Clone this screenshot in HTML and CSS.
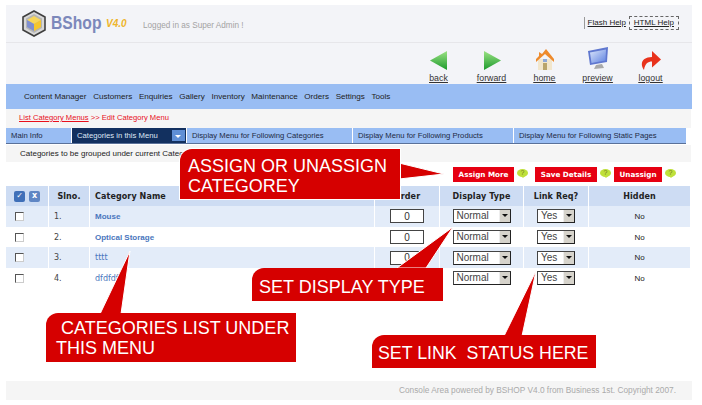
FILE: index.html
```html
<!DOCTYPE html>
<html lang="en">
<head>
    <meta charset="UTF-8">
    <meta name="viewport" content="width=device-width, initial-scale=1.0">
    <title>BShop - Edit Category Menu</title>
    <link rel="stylesheet" href="styles.css">
</head>
<body>
    <div class="page">
        <div class="top">
            <div class="logo">
                <svg width="24" height="27" viewBox="0 0 24 27">
                    <polygon points="12,1 23,7 23,20 12,26 1,20 1,7" fill="#d8d8d8" stroke="#3f3f3f" stroke-width="1.6"/>
                    <polygon points="12,4 20,8.500 20,18 12,23 4,18 4,8.500" fill="#b5b5b5"/>
                    <polygon points="12,6 19,10 12,14 5,10" fill="#f7d65a"/>
                    <polygon points="5,10 12,14 12,21 5,17" fill="#7f8fd0"/>
                    <polygon points="19,10 19,17 12,21 12,14" fill="#f5c62e"/>
                </svg>
                <span class="brand">BShop</span>
                <span class="version">V4.0</span>
            </div>
            <div class="logged">Logged in as Super Admin !</div>
            <div class="help">
                <a href="#" class="flash">Flash Help</a>
                <a href="#" class="html-help">HTML Help</a>
            </div>
        </div>

        <div class="toolbar">
            <a href="#" class="tool">
                <svg width="20" height="21" viewBox="0 0 20 21"><defs><linearGradient id="gr" x1="0" y1="0" x2="0" y2="1"><stop offset="0" stop-color="#9be284"/><stop offset="1" stop-color="#1c9a2c"/></linearGradient><linearGradient id="scr" x1="0" y1="0" x2="1" y2="1"><stop offset="0" stop-color="#dbe6fb"/><stop offset="1" stop-color="#5f82e0"/></linearGradient></defs><polygon points="18,1 18,20 1,10.500" fill="url(#gr)"/></svg>
                <span>back</span>
            </a>
            <a href="#" class="tool">
                <svg width="20" height="21" viewBox="0 0 20 21"><polygon points="2,1 2,20 19,10.500" fill="url(#gr)"/></svg>
                <span>forward</span>
            </a>
            <a href="#" class="tool">
                <svg width="20" height="23" viewBox="0 0 20 23"><polygon points="3,11 17,11 17,22 3,22" fill="#f2e6cc"/><rect x="8" y="15" width="4" height="7" fill="#b9a46a"/><rect x="8" y="11" width="4" height="3" fill="#8fa8d8"/><polygon points="11,1 19,11 19,14 10,6 1,14 1,11 4,8 4,4 7,6" fill="#ee8a2c"/></svg>
                <span>home</span>
            </a>
            <a href="#" class="tool">
                <svg width="22" height="24" viewBox="0 0 22 24"><polygon points="1,4 21,0 20,15 3,18" fill="#5f77cf"/><polygon points="3,5.500 19,2.500 18.500,13.500 4.500,16" fill="url(#scr)"/><polygon points="9,18 15,17 17,21 7,22" fill="#a9a9a9"/></svg>
                <span>preview</span>
            </a>
            <a href="#" class="tool">
                <svg width="22" height="21" viewBox="0 0 22 21"><path d="M4 20C-1 13 3 7 12 7V1l9 8.500-9 8v-6c-4 0-7 2-8 8.500z" fill="#e8321c"/></svg>
                <span>logout</span>
            </a>
        </div>

        <div class="nav">
            <a href="#">Content Manager</a>
            <a href="#">Customers</a>
            <a href="#">Enquiries</a>
            <a href="#">Gallery</a>
            <a href="#">Inventory</a>
            <a href="#">Maintenance</a>
            <a href="#">Orders</a>
            <a href="#">Settings</a>
            <a href="#">Tools</a>
        </div>

        <div class="crumb"><a href="#">List Category Menus</a> &gt;&gt; Edit Category Menu</div>

        <div class="tabs">
            <div class="tab">Main Info</div>
            <div class="tab active">Categories in this Menu
                <span class="tab-arrow"></span>
            </div>
            <div class="tab">Display Menu for Following Categories</div>
            <div class="tab">Display Menu for Following Products</div>
            <div class="tab">Display Menu for Following Static Pages</div>
        </div>

        <div class="info">Categories to be grouped under current Category</div>

        <div class="actions">
            <a href="#" class="btn btn-assign">Assign More</a><span class="hint">?</span>
            <a href="#" class="btn btn-save">Save Details</a><span class="hint">?</span>
            <a href="#" class="btn btn-un">Unassign</a><span class="hint">?</span>
        </div>

        <table class="list">
            <thead>
                <tr>
                    <th class="c-check"><span class="tick">&#10003;</span><span class="tick">x</span></th>
                    <th class="c-no">Slno.</th>
                    <th class="c-name">Category Name</th>
                    <th class="c-order">Order</th>
                    <th class="c-type">Display Type</th>
                    <th class="c-link">Link Req?</th>
                    <th class="c-hidden">Hidden</th>
                </tr>
            </thead>
            <tbody>
                <tr class="odd">
                    <td class="c-check"><input type="checkbox"></td>
                    <td class="c-no">1.</td>
                    <td class="c-name"><a href="#" class="bold">Mouse</a></td>
                    <td class="c-order"><input type="text" class="order" value="0"></td>
                    <td class="c-type"><div class="sel sel-type">Normal<span class="sel-btn"></span></div></td>
                    <td class="c-link"><div class="sel sel-link">Yes<span class="sel-btn"></span></div></td>
                    <td class="c-hidden">No</td>
                </tr>
                <tr>
                    <td class="c-check"><input type="checkbox"></td>
                    <td class="c-no">2.</td>
                    <td class="c-name"><a href="#" class="bold">Optical Storage</a></td>
                    <td class="c-order"><input type="text" class="order" value="0"></td>
                    <td class="c-type"><div class="sel sel-type">Normal<span class="sel-btn"></span></div></td>
                    <td class="c-link"><div class="sel sel-link">Yes<span class="sel-btn"></span></div></td>
                    <td class="c-hidden">No</td>
                </tr>
                <tr class="odd">
                    <td class="c-check"><input type="checkbox"></td>
                    <td class="c-no">3.</td>
                    <td class="c-name"><a href="#">tttt</a></td>
                    <td class="c-order"><input type="text" class="order" value="0"></td>
                    <td class="c-type"><div class="sel sel-type">Normal<span class="sel-btn"></span></div></td>
                    <td class="c-link"><div class="sel sel-link">Yes<span class="sel-btn"></span></div></td>
                    <td class="c-hidden">No</td>
                </tr>
                <tr>
                    <td class="c-check"><input type="checkbox"></td>
                    <td class="c-no">4.</td>
                    <td class="c-name"><a href="#">dfdfdf</a></td>
                    <td class="c-order"><input type="text" class="order" value="0"></td>
                    <td class="c-type"><div class="sel sel-type">Normal<span class="sel-btn"></span></div></td>
                    <td class="c-link"><div class="sel sel-link">Yes<span class="sel-btn"></span></div></td>
                    <td class="c-hidden">No</td>
                </tr>
            </tbody>
        </table>

        <div class="footer">Console Area powered by BSHOP V4.0 from Business 1st. Copyright 2007.</div>
    </div>

    <!-- red notes drawn over the screenshot -->
    <svg class="pointers" width="702" height="405" viewBox="0 0 702 405">
        <g fill="#d60000" stroke="#ffffff" stroke-width="1">
            <polygon points="399,163 444,174 399,179"/>
            <polygon points="397,268 453,227 426,268"/>
            <polygon points="100,314 130,251 121,314"/>
            <polygon points="504,336 536,271 522,336"/>
        </g>
    </svg>
    <div class="note note-assign">ASSIGN OR UNASSIGN<br>CATEGOREY</div>
    <div class="note note-type">SET DISPLAY TYPE</div>
    <div class="note note-list">&nbsp;CATEGORIES LIST UNDER<br>THIS MENU</div>
    <div class="note note-link">SET LINK &nbsp;STATUS HERE</div>
</body>
</html>
```

FILE: styles.css
```css
body { margin: 0; font-family: "Liberation Sans", Arial, sans-serif; font-size: 8px; color: #222; background: #fff; }
a { color: inherit; }
.page { width: 686px; margin-left: 6px; padding-top: 5px; }

.top { display: flex; align-items: center; height: 37px; background: #f3f4f8; border-bottom: 1px solid #e6e6ea; }
.logo { display: flex; align-items: center; margin-left: 16px; width: 121px; }
.brand { width: 49px; margin-left: 5px; font-size: 18px; font-weight: bold; color: #7c88bb; transform: scaleX(0.87); transform-origin: left center; }
.version { font-size: 10px; font-weight: bold; font-style: italic; color: #eeb52c; margin-left: 6px; }
.logged { font-size: 8.2px; color: #a3a3a3; margin-top: 3px; }
.help { display: flex; align-items: center; margin-left: auto; margin-right: 13px; margin-top: -1px; color: #222; }
.flash { border-left: 1px solid #999; padding: 0 3px; line-height: 12px; }
.html-help { border: 1px dashed #666; padding: 0 4px; line-height: 12px; }

.toolbar { display: flex; justify-content: flex-end; height: 41px; padding-right: 15px; background: #f3f4f8; }
.tool { width: 53px; height: 41px; display: flex; flex-direction: column; align-items: center; justify-content: flex-end; color: #333; font-size: 8.8px; }
.tool span { text-decoration: underline; line-height: 12px; margin-top: 1px; }
.tool svg { display: block; }

.nav { display: flex; align-items: center; gap: 6.6px; height: 25px; padding-left: 18px; background: #99bdf3; color: #222; font-size: 8.1px; }
.nav a { text-decoration: none; }

.crumb { height: 19px; line-height: 18px; padding-left: 13px; background: #f5f5f5; color: #e8101c; margin-right: 1px; font-size: 7.6px; }

.tabs { display: grid; grid-template-columns: 65px 114px 165px 160px 172px; column-gap: 1px; height: 15px; width: 680px; line-height: 15px; background: #fff; border-bottom: 1px solid #5a7199; }
.tab { background: #99bdf3; padding-left: 5px; font-size: 7.7px; color: #1d2a44; white-space: nowrap; }
.tab.active { position: relative; background: #12305f; color: #dfe7f5; }
.tab-arrow { position: absolute; right: 1px; top: 2px; width: 13px; height: 11px; background: #5f8fd6; }
.tab-arrow::after { content: ""; position: absolute; left: 3px; top: 5px; border: 3.5px solid transparent; border-top-color: #fff; border-bottom: 0; }

.info { height: 17px; line-height: 17px; margin-top: 1px; padding-left: 14px; background: #f5f5f5; margin-right: 1px; }

.actions { display: flex; align-items: center; height: 24px; padding-left: 447px; }
.btn { display: block; height: 15px; line-height: 15px; text-align: center; color: #fff; background: #e60012; font-family: "DejaVu Sans", sans-serif; font-size: 7.2px; font-weight: bold; text-decoration: none; white-space: nowrap; }
.btn-assign { width: 61px; }
.btn-save { width: 62px; margin-left: 7px; }
.btn-un { width: 48px; margin-left: 3px; }
.hint { position: relative; width: 11px; height: 8px; margin-left: 3px; margin-top: -3px; border-radius: 50%; background: #bfe03a; color: #6d7a20; font-size: 7px; line-height: 8px; text-align: center; }
.hint::after { content: ""; position: absolute; left: 4px; top: 7px; border: 2px solid transparent; border-top-color: #bfe03a; border-bottom: 0; }

.list { width: 684px; border-collapse: separate; border-spacing: 0; table-layout: fixed; }
.list th, .list td { box-sizing: border-box; padding: 0; border-left: 1px solid #fff; }
.list th { height: 20px; background: #cddcf3; font-family: "DejaVu Sans", sans-serif; font-size: 8px; letter-spacing: 0.1px; color: #222; }
.list td { height: 20.7px; text-align: center; font-size: 8px; }
.list tr.odd td { background: #e3ecf9; }
.list th:first-child, .list td:first-child { border-left: 0; }
.c-check { width: 42px; }
.c-no { width: 41px; }
.c-name { width: 285px; }
.c-order { width: 65px; }
.c-type { width: 84px; }
.c-link { width: 65px; }
.list th.c-name, .list td.c-name { text-align: left; padding-left: 5px; }
.list td.c-no { text-align: left; padding-left: 5px; font-family: "DejaVu Sans", sans-serif; font-size: 8px; color: #444; }
.list td.c-name a { color: #4a76bd; text-decoration: none; font-family: "DejaVu Sans", sans-serif; font-size: 8px; }
.list td.c-name a.bold { font-family: "Liberation Sans", sans-serif; font-weight: bold; }

.tick { display: inline-block; width: 11px; height: 11px; margin: 0 2px; line-height: 10px; border-radius: 2px; background: #3f6fb8; color: #fff; font-size: 8px; font-weight: bold; vertical-align: middle; letter-spacing: 0; }
.tick + .tick { background: #5f86c4; }

input[type=checkbox] { appearance: none; display: block; width: 9px; height: 9px; margin: 0 0 0 9px; background: #fff; border: 1px solid; border-color: #555 #ccc #ccc #555; }
.order { display: block; box-sizing: border-box; width: 34px; height: 14px; margin: 0 auto; padding: 0; border: 1px solid #444; background: #fff; font-family: "Liberation Sans", sans-serif; font-size: 10px; line-height: 12px; text-align: center; color: #333; }

.sel { position: relative; box-sizing: border-box; height: 14px; margin: 0 auto; padding-left: 3px; border: 1px solid #444; border-right-color: #222; border-bottom-color: #222; background: #fff; font-size: 10px; line-height: 12px; text-align: left; color: #444; }
.sel-type { width: 58px; }
.sel-link { width: 38px; }
.sel-btn { position: absolute; right: 0; top: 0; width: 10px; height: 12px; background: #d6d3cb; border-left: 1px solid #eee; }
.sel-btn::after { content: ""; position: absolute; left: 2px; top: 4px; border: 3px solid transparent; border-top-color: #111; border-bottom: 0; }

.footer { height: 19px; line-height: 18px; margin-top: 92px; padding-right: 16px; background: #f5f5f5; text-align: right; color: #aaa; font-size: 8.3px; }

/* overlays */
.pointers { position: absolute; left: 0; top: 0; }
.note { position: absolute; box-sizing: border-box; background: #d60000; color: #fff; font-size: 18px; line-height: 20px; border-top-left-radius: 12px; white-space: nowrap; }
.note-assign { left: 180px; top: 149px; width: 220px; height: 50px; padding: 7px 0 0 8px; box-shadow: 0 0 0 1px #fff; }
.note-type { left: 252px; top: 268px; width: 191px; height: 33px; padding: 9px 0 0 7px; }
.note-list { left: 46px; top: 313px; width: 250px; height: 49px; padding: 5px 0 0 10px; }
.note-link { left: 372px; top: 335px; width: 224px; height: 33px; padding: 8px 0 0 6px; font-size: 17.8px; }
```
